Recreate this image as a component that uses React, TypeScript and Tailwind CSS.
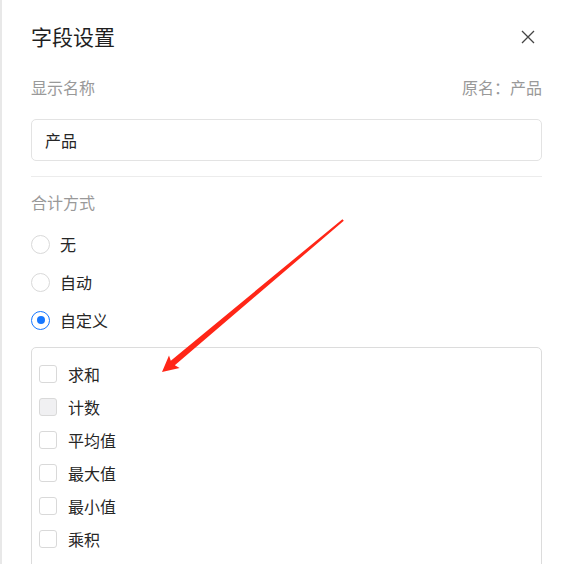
import React from "react";

const font = { fontFamily: '"Noto Sans CJK SC", "Noto Sans", sans-serif' };

function Radio({ label, checked }: { label: string; checked?: boolean }) {
  return (
    <div className="flex items-center h-[38px]">
      <span
        className={
          checked
            ? "w-[19px] h-[19px] rounded-full border border-[#1677ff] flex items-center justify-center"
            : "w-[19px] h-[19px] rounded-full border border-[#d9d9d9]"
        }
      >
        {checked && <span className="w-[8px] h-[8px] rounded-full bg-[#1677ff]" />}
      </span>
      <span className="ml-[10px] text-[16px] leading-[24px] text-[#262626]">{label}</span>
    </div>
  );
}

function Check({ label, hover }: { label: string; hover?: boolean }) {
  return (
    <div className="flex items-center h-[33px]">
      <span
        className={
          hover
            ? "w-[18px] h-[18px] rounded-[3px] border border-[#d9d9d9] bg-[#f0f0f2]"
            : "w-[18px] h-[18px] rounded-[3px] border border-[#d9d9d9] bg-white"
        }
      />
      <span className="ml-[11px] text-[16px] leading-[24px] text-[#262626]">{label}</span>
    </div>
  );
}

export default function App() {
  return (
    <div className="relative w-[564px] h-[564px] overflow-hidden bg-white" style={font}>
      <div className="absolute left-0 top-0 w-[2px] h-full bg-[#e8e8e8]" />
      <div className="flex flex-col pl-[31px] pr-[22px] pt-[22px]">
        <div className="flex items-center justify-between h-[28px]">
          <span className="text-[21px] leading-[28px] text-[#1f1f1f]">字段设置</span>
          <svg width="14" height="14" viewBox="0 0 14 14" className="mr-[7px] mt-[1px]">
            <path d="M1 1 L13 13 M13 1 L1 13" stroke="#444" strokeWidth="1.3" fill="none" />
          </svg>
        </div>
        <div className="mt-[25px] flex items-center justify-between h-[24px] text-[16px] leading-[24px] text-[#999]">
          <span>显示名称</span>
          <span>原名：产品</span>
        </div>
        <div className="mt-[20px] h-[42px] rounded-[5px] border border-[#e3e3e3] flex items-center pl-[13px] text-[16px] text-[#262626]">
          产品
        </div>
        <div className="mt-[15px] h-px bg-[#ececec]" />
        <div className="mt-[13px] h-[24px] text-[16px] leading-[24px] text-[#999]">合计方式</div>
        <div className="mt-[11px] flex flex-col">
          <Radio label="无" />
          <Radio label="自动" />
          <Radio label="自定义" checked />
        </div>
        <div className="mt-[8px] h-[260px] rounded-[5px] border border-[#dcdcdc] pl-[7px] pt-[9px] flex flex-col">
          <Check label="求和" />
          <Check label="计数" hover />
          <Check label="平均值" />
          <Check label="最大值" />
          <Check label="最小值" />
          <Check label="乘积" />
        </div>
      </div>
      <svg className="absolute left-0 top-0 pointer-events-none" width="564" height="564">
        <polygon
          points="343.8,220.8 174.8,365.3 179.6,368 162,372 169,355.4 170.8,360.7 342.4,219.2"
          fill="#ff2617"
        />
      </svg>
    </div>
  );
}
